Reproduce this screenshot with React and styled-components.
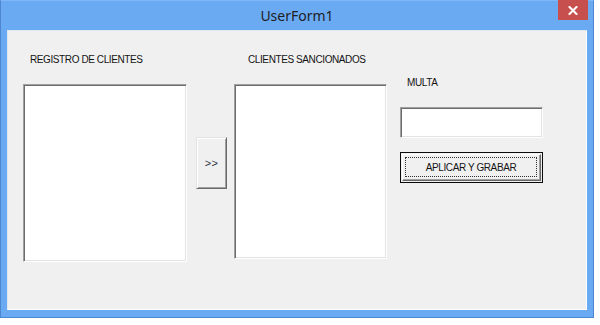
import React from 'react';
import styled, { createGlobalStyle } from 'styled-components';

const GlobalStyle = createGlobalStyle`
  html, body {
    margin: 0;
    padding: 0;
    background: #ffffff;
  }
`;

const Window = styled.div`
  width: 594px;
  height: 318px;
  box-sizing: border-box;
  background: #6aaaf3;
  border: 1px solid #4d86d0;
  border-top-color: #7fb6f5;
  display: flex;
  flex-direction: column;
`;

const TitleBar = styled.div`
  height: 29px;
  display: grid;
  grid-template-columns: 1fr auto 1fr;
  align-items: start;
`;

const Title = styled.div`
  grid-column: 2;
  font-family: "Noto Sans", "Open Sans", sans-serif;
  font-size: 14px;
  line-height: 29px;
  color: #1e1e1e;
`;

const CloseButton = styled.div`
  grid-column: 3;
  justify-self: end;
  width: 30px;
  height: 20px;
  margin-top: -1px;
  margin-right: 5px;
  background: #c7504f;
  display: flex;
  align-items: center;
  justify-content: center;
`;

const Client = styled.div`
  flex: 1;
  margin: 0 6px 7px 6px;
  background: #f0f0f0;
  border: 1px solid #dfe6ee;
  border-bottom-color: #ffffff;
  border-right-color: #ffffff;
  display: flex;
  align-items: flex-start;
  padding: 0 0 0 15px;
`;

const Column = styled.div`
  display: flex;
  flex-direction: column;
  width: ${p => p.$width}px;
  margin-left: ${p => p.$gap || 0}px;
`;

const Label = styled.div`
  font-family: "Liberation Sans", Arial, sans-serif;
  font-size: 10px;
  letter-spacing: -0.4px;
  color: #141414;
  height: 12px;
  line-height: 12px;
  margin-top: ${p => p.$top}px;
  margin-left: ${p => p.$indent}px;
  white-space: nowrap;
`;

const ListBox = styled.div`
  box-sizing: border-box;
  width: 100%;
  height: ${p => p.$height}px;
  margin-top: ${p => p.$top}px;
  background: #ffffff;
  border: 1px solid;
  border-color: #a0a0a0 #ffffff #ffffff #a0a0a0;
  box-shadow: inset 1px 1px 0 #6d6d6d, inset -1px -1px 0 #e3e3e3;
`;

const RaisedButton = styled.div`
  box-sizing: border-box;
  width: ${p => p.$width}px;
  height: ${p => p.$height}px;
  margin-top: ${p => p.$top}px;
  margin-left: ${p => p.$left || 0}px;
  background: #f0f0f0;
  border: 1px solid;
  border-color: #e3e3e3 #696969 #696969 #e3e3e3;
  box-shadow: inset 1px 1px 0 #ffffff, inset -1px -1px 0 #a0a0a0;
  display: flex;
  align-items: center;
  justify-content: center;
  font-family: "Liberation Sans", Arial, sans-serif;
  font-size: 11px;
  letter-spacing: 0.3px;
  color: #33364a;
`;

const DefaultButton = styled.div`
  box-sizing: border-box;
  width: 143px;
  height: 31px;
  margin-top: 14px;
  border: 1px solid #0a0a0a;
  background: #f0f0f0;
  padding: 1px;
  display: flex;
`;

const DefaultInner = styled.div`
  flex: 1;
  box-sizing: border-box;
  border: 1px solid;
  border-color: #ffffff #696969 #696969 #ffffff;
  box-shadow: inset -1px -1px 0 #a0a0a0;
  padding: 2px 3px 3px 2px;
  display: flex;
`;

const FocusRect = styled.div`
  flex: 1;
  border: 1px dotted #303030;
  display: flex;
  align-items: center;
  justify-content: center;
  font-family: "Liberation Sans", Arial, sans-serif;
  font-size: 10px;
  letter-spacing: -0.4px;
  color: #141414;
  white-space: nowrap;
`;

const TextBox = styled.div`
  box-sizing: border-box;
  width: 143px;
  height: 31px;
  margin-top: 18px;
  background: #ffffff;
  border: 1px solid;
  border-color: #a0a0a0 #ffffff #ffffff #a0a0a0;
  box-shadow: inset 1px 1px 0 #6d6d6d, inset -1px -1px 0 #e3e3e3;
`;

export default function App() {
  return (
    <>
      <GlobalStyle />
      <Window>
        <TitleBar>
          <Title>UserForm1</Title>
          <CloseButton>
            <svg width="10" height="9" viewBox="0 0 10 9">
              <path d="M1.5 1 L8.5 8 M8.5 1 L1.5 8" stroke="#ffffff" strokeWidth="2" strokeLinecap="square" />
            </svg>
          </CloseButton>
        </TitleBar>
        <Client>
          <Column $width={164}>
            <Label $top={23} $indent={7}>REGISTRO DE CLIENTES</Label>
            <ListBox $top={18} $height={178} />
          </Column>
          <RaisedButton $width={31} $height={52} $top={106} $left={9}>&gt;&gt;</RaisedButton>
          <Column $width={153} $gap={7}>
            <Label $top={23} $indent={14}>CLIENTES SANCIONADOS</Label>
            <ListBox $top={18} $height={175} />
          </Column>
          <Column $width={143} $gap={13}>
            <Label $top={46} $indent={7}>MULTA</Label>
            <TextBox />
            <DefaultButton>
              <DefaultInner>
                <FocusRect>APLICAR Y GRABAR</FocusRect>
              </DefaultInner>
            </DefaultButton>
          </Column>
        </Client>
      </Window>
    </>
  );
}
